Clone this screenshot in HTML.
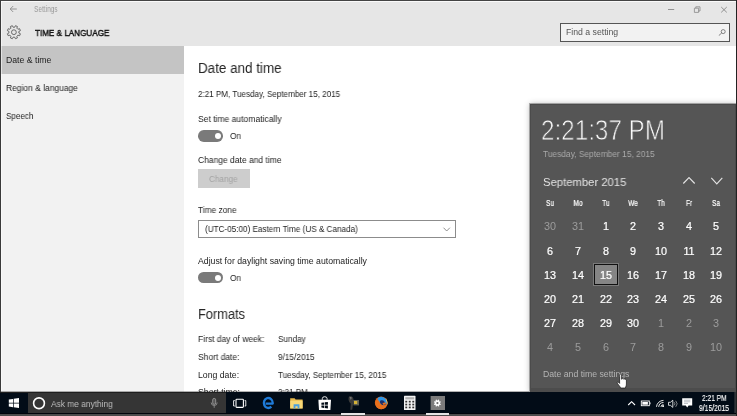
<!DOCTYPE html>
<html><head><meta charset="utf-8">
<style>
*{margin:0;padding:0;box-sizing:border-box}
html,body{width:737px;height:416px;overflow:hidden;background:#fff}
body{font-family:"Liberation Sans",sans-serif;color:#222;position:relative}
.abs{position:absolute}
.t,.c,.dh{will-change:transform}
.t{position:absolute;white-space:nowrap;line-height:1;transform-origin:0 50%}
#hdr{left:0;top:0;width:737px;height:46px;background:#e6e6e6}
#side{left:0;top:46px;width:184px;height:346px;background:#f2f2f2}
#sel{left:0;top:46px;width:184px;height:27.500px;background:#c4c4c4}
#bt{z-index:8;left:0;top:0;width:737px;height:1px;background:#444}
#bl{z-index:8;left:0;top:0;width:1px;height:392px;background:#3a3a3a}
#br{z-index:8;left:736px;top:0;width:1px;height:416px;background:#222}
#search{left:560px;top:22.500px;width:170px;height:19px;border:1px solid #555;background:#f2f2f2}
#cal{left:530px;top:104px;width:206px;height:288px;background:#555;border:1px solid #4b4b4b;border-bottom:0;box-shadow:0 0 0 1px rgba(70,70,70,.4),0 0 6px rgba(0,0,0,.3)}
#calb{left:530px;top:388px;width:206px;height:4px;background:#4c4c4c}
#task{z-index:5;left:0;top:392px;width:737px;height:24px;background:#020c17}
#tsearch{z-index:5;left:27.500px;top:392px;width:198px;height:24px;background:#353535}
#tbot{z-index:7;left:0;top:414px;width:737px;height:2px;background:#4c4c4c}
.ul{position:absolute;z-index:8;top:413px;height:2px;background:#e4e4e4}
#tline{z-index:6;left:0;top:391px;width:529px;height:1px;background:rgba(0,0,0,.3)}
#tline3{z-index:6;left:0;top:413px;width:737px;height:1px;background:#00040b}
#tline2{z-index:6;left:0;top:392px;width:226px;height:1px;background:#1e1e1e}
.tg{position:absolute;width:25.300px;height:11.600px;border-radius:5.800px;background:#7a7a7a}
.tg i{position:absolute;left:16.700px;top:2.800px;width:6px;height:6px;border-radius:50%;background:#fff}
.c{position:absolute;width:28px;text-align:center;font-size:10.800px;color:#fff;line-height:1;white-space:nowrap;-webkit-text-stroke:0.200px #fff}
.d{color:#9c9c9c;-webkit-text-stroke:0}
.dh{transform:scaleX(.79);position:absolute;width:28px;text-align:center;font-size:8.200px;color:#fff;line-height:1;-webkit-text-stroke:0.200px #fff}
</style></head><body>
<div class="abs" id="hdr"></div>
<div class="abs" id="side"></div>
<div class="abs" id="sel"></div>
<div class="abs" id="search"></div>
<div class="abs" style="left:1px;top:1px;width:735px;height:1px;background:rgba(255,255,255,.8)"></div><div class="abs" style="left:1px;top:1px;width:1px;height:390px;background:rgba(255,255,255,.55)"></div>

<!-- title bar icons -->
<svg class="abs" style="left:9px;top:5px" width="10" height="9" viewBox="0 0 10 9"><path d="M4.200 1 L1.200 4 L4.200 7 M1.200 4 H7.800" stroke="#8c8c8c" stroke-width="0.900" fill="none"/></svg>
<svg class="abs" style="left:665px;top:4px" width="70" height="12" viewBox="0 0 70 12">
<path d="M3 5.500 H9.200" stroke="#888" stroke-width="0.900" fill="none"/>
<path d="M29.400 4.200 h4.200 v4.200 h-4.200 z M30.800 4.200 v-1.400 h4.200 v4.200 h-1.400" stroke="#888" stroke-width="0.800" fill="none"/>
<path d="M56.200 3 L61.800 8.400 M61.800 3 L56.200 8.400" stroke="#888" stroke-width="0.900" fill="none"/>
</svg>
<!-- gear -->
<svg class="abs" style="left:0;top:20px" width="30" height="24" viewBox="0 20 30 24"><path d="M18.85 32.94 L20.41 33.76 L19.61 35.70 L17.92 35.17 L16.87 36.22 L17.40 37.91 L15.46 38.71 L14.64 37.15 L13.16 37.15 L12.34 38.71 L10.40 37.91 L10.93 36.22 L9.88 35.17 L8.19 35.70 L7.39 33.76 L8.95 32.94 L8.95 31.46 L7.39 30.64 L8.19 28.70 L9.88 29.23 L10.93 28.18 L10.40 26.49 L12.34 25.69 L13.16 27.25 L14.64 27.25 L15.46 25.69 L17.40 26.49 L16.87 28.18 L17.92 29.23 L19.61 28.70 L20.41 30.64 L18.85 31.46 Z" fill="none" stroke="#5c5c5c" stroke-width="0.9" stroke-linejoin="round"/><circle cx="13.9" cy="32.2" r="2.4" fill="none" stroke="#5c5c5c" stroke-width="0.9"/></svg>
<!-- search icon -->
<svg class="abs" style="left:718px;top:29px" width="8" height="7" viewBox="0 0 8 7"><circle cx="5.200" cy="2.600" r="2" stroke="#666" stroke-width="0.800" fill="none"/><path d="M3.700 4 L0.800 6.600" stroke="#666" stroke-width="0.800" fill="none"/></svg>

<!-- content widgets -->
<div class="tg" style="left:198px;top:130px"><i></i></div>
<div class="abs" style="left:198px;top:169px;width:52px;height:19px;background:#cdcdcd"></div>
<div class="abs" style="left:198px;top:220px;width:258px;height:18px;border:1px solid #8c8c8c;background:#fff"></div>
<svg class="abs" style="left:440px;top:224px" width="14" height="10" viewBox="440 224 14 10"><path d="M443.500 227.700 L446.700 231 L449.900 227.700" stroke="#7c7c7c" stroke-width="0.850" fill="none"/></svg>
<div class="tg" style="left:198px;top:271.800px"><i></i></div>

<!-- calendar panel -->
<div class="abs" id="cal"></div><div class="abs" id="calb"></div>
<svg class="abs" style="left:680px;top:172px" width="50" height="16" viewBox="680 172 50 16"><path d="M683.300 183.500 L689 177.500 L694.700 183.500 M711.300 177.900 L716.800 183.900 L722.300 177.900" stroke="#e2e2e2" stroke-width="1.150" fill="none"/></svg>
<!-- selected day -->
<div class="abs" style="left:593px;top:263px;width:26px;height:23px;background:#858585;border:1px solid #7a7a7a;box-shadow:inset 0 0 0 1px #111"></div>

<div class="t" id="t0" style="left:34.00px;top:6.00px;font-size:8.2px;color:#9a9a9a;transform:scaleX(0.7965);">Settings</div>
<div class="t" id="t1" style="left:35.00px;top:28.00px;font-size:9.8px;color:#111;transform:scaleX(0.8279);-webkit-text-stroke:0.45px #111">TIME &amp; LANGUAGE</div>
<div class="t" id="t2" style="left:566.00px;top:28.00px;font-size:8.7px;color:#555;transform:scaleX(1.0010);">Find a setting</div>
<div class="t" id="t3" style="left:6.00px;top:56.00px;font-size:8.7px;color:#222;transform:scaleX(0.9898);">Date &amp; time</div>
<div class="t" id="t4" style="left:6.00px;top:84.00px;font-size:8.7px;color:#222;transform:scaleX(0.9732);">Region &amp; language</div>
<div class="t" id="t5" style="left:6.00px;top:112.00px;font-size:8.7px;color:#222;transform:scaleX(0.9281);">Speech</div>
<div class="t" id="t6" style="left:198.00px;top:61.00px;font-size:14px;color:#262626;transform:scaleX(0.9595);">Date and time</div>
<div class="t" id="t7" style="left:198.00px;top:90.00px;font-size:8.7px;color:#222;transform:scaleX(0.9296);">2:21 PM, Tuesday, September 15, 2015</div>
<div class="t" id="t8" style="left:198.00px;top:115.00px;font-size:8.7px;color:#222;transform:scaleX(0.9828);">Set time automatically</div>
<div class="t" id="t9" style="left:230.00px;top:132.00px;font-size:8.7px;color:#222;transform:scaleX(0.9571);">On</div>
<div class="t" id="t10" style="left:198.00px;top:156.00px;font-size:8.7px;color:#222;transform:scaleX(0.9770);">Change date and time</div>
<div class="t" id="t11" style="left:209.00px;top:175.00px;font-size:8.7px;color:#a4a4a4;transform:scaleX(0.9424);">Change</div>
<div class="t" id="t12" style="left:198.00px;top:206.00px;font-size:8.7px;color:#222;transform:scaleX(0.9570);">Time zone</div>
<div class="t" id="t13" style="left:205.00px;top:225.00px;font-size:8.7px;color:#222;transform:scaleX(0.9362);">(UTC-05:00) Eastern Time (US &amp; Canada)</div>
<div class="t" id="t14" style="left:198.00px;top:257.00px;font-size:8.7px;color:#222;transform:scaleX(1.0024);">Adjust for daylight saving time automatically</div>
<div class="t" id="t15" style="left:230.00px;top:274.00px;font-size:8.7px;color:#222;transform:scaleX(0.9571);">On</div>
<div class="t" id="t16" style="left:198.00px;top:307.00px;font-size:14px;color:#262626;transform:scaleX(0.9152);">Formats</div>
<div class="t" id="t17" style="left:198.00px;top:335.00px;font-size:8.7px;color:#222;transform:scaleX(0.9744);">First day of week:</div>
<div class="t" id="t18" style="left:278.00px;top:335.00px;font-size:8.7px;color:#222;transform:scaleX(0.9414);">Sunday</div>
<div class="t" id="t19" style="left:198.00px;top:353.00px;font-size:8.7px;color:#222;transform:scaleX(0.9770);">Short date:</div>
<div class="t" id="t20" style="left:278.00px;top:353.00px;font-size:8.7px;color:#222;transform:scaleX(0.9483);">9/15/2015</div>
<div class="t" id="t21" style="left:198.00px;top:371.00px;font-size:8.7px;color:#222;transform:scaleX(0.9886);">Long date:</div>
<div class="t" id="t22" style="left:278.00px;top:371.00px;font-size:8.7px;color:#222;transform:scaleX(0.9354);">Tuesday, September 15, 2015</div>
<div class="t" id="t23" style="left:198.00px;top:388.00px;font-size:8.7px;color:#222;transform:scaleX(0.9890);">Short time:</div>
<div class="t" id="t24" style="left:278.00px;top:388.00px;font-size:8.7px;color:#222;transform:scaleX(0.9216);">2:21 PM</div>
<div class="t" id="t25" style="left:541.00px;top:116.00px;font-size:28.6px;color:#fff;transform:scaleX(0.8475);-webkit-text-stroke:0.8px #555">2:21:37 PM</div>
<div class="t" id="t26" style="left:543.00px;top:150.00px;font-size:8.7px;color:#aaa;transform:scaleX(0.9640);">Tuesday, September 15, 2015</div>
<div class="t" id="t27" style="left:543.00px;top:177.00px;font-size:11.5px;color:#e4e4e4;transform:scaleX(0.9798);">September 2015</div>
<div class="t" id="t28" style="left:543.00px;top:370.00px;font-size:8.7px;color:#b4b4b4;transform:scaleX(0.9947);">Date and time settings</div>
<div class="t" id="t29" style="left:51.00px;top:400.00px;font-size:9px;color:#bebebe;transform:scaleX(0.9288);z-index:6">Ask me anything</div>
<div class="t" id="t30" style="left:702.00px;top:395.00px;font-size:8.2px;color:#fff;transform:scaleX(0.8068);z-index:6;-webkit-text-stroke:0.15px #fff">2:21 PM</div>
<div class="t" id="t31" style="left:699.00px;top:405.00px;font-size:8.2px;color:#fff;transform:scaleX(0.8254);z-index:6;-webkit-text-stroke:0.15px #fff">9/15/2015</div>
<div class="dh" style="left:536.40px;top:200.00px">Su</div>
<div class="dh" style="left:564.00px;top:200.00px">Mo</div>
<div class="dh" style="left:591.70px;top:200.00px">Tu</div>
<div class="dh" style="left:619.20px;top:200.00px">We</div>
<div class="dh" style="left:646.80px;top:200.00px">Th</div>
<div class="dh" style="left:674.50px;top:200.00px">Fr</div>
<div class="dh" style="left:702.30px;top:200.00px">Sa</div>
<div class="c d" style="left:536.40px;top:221.00px">30</div>
<div class="c d" style="left:564.00px;top:221.00px">31</div>
<div class="c" style="left:591.70px;top:221.00px">1</div>
<div class="c" style="left:619.20px;top:221.00px">2</div>
<div class="c" style="left:646.80px;top:221.00px">3</div>
<div class="c" style="left:674.50px;top:221.00px">4</div>
<div class="c" style="left:702.30px;top:221.00px">5</div>
<div class="c" style="left:536.40px;top:246.00px">6</div>
<div class="c" style="left:564.00px;top:246.00px">7</div>
<div class="c" style="left:591.70px;top:246.00px">8</div>
<div class="c" style="left:619.20px;top:246.00px">9</div>
<div class="c" style="left:646.80px;top:246.00px">10</div>
<div class="c" style="left:674.50px;top:246.00px">11</div>
<div class="c" style="left:702.30px;top:246.00px">12</div>
<div class="c" style="left:536.40px;top:270.00px">13</div>
<div class="c" style="left:564.00px;top:270.00px">14</div>
<div class="c" style="left:591.70px;top:270.00px">15</div>
<div class="c" style="left:619.20px;top:270.00px">16</div>
<div class="c" style="left:646.80px;top:270.00px">17</div>
<div class="c" style="left:674.50px;top:270.00px">18</div>
<div class="c" style="left:702.30px;top:270.00px">19</div>
<div class="c" style="left:536.40px;top:294.00px">20</div>
<div class="c" style="left:564.00px;top:294.00px">21</div>
<div class="c" style="left:591.70px;top:294.00px">22</div>
<div class="c" style="left:619.20px;top:294.00px">23</div>
<div class="c" style="left:646.80px;top:294.00px">24</div>
<div class="c" style="left:674.50px;top:294.00px">25</div>
<div class="c" style="left:702.30px;top:294.00px">26</div>
<div class="c" style="left:536.40px;top:318.00px">27</div>
<div class="c" style="left:564.00px;top:318.00px">28</div>
<div class="c" style="left:591.70px;top:318.00px">29</div>
<div class="c" style="left:619.20px;top:318.00px">30</div>
<div class="c d" style="left:646.80px;top:318.00px">1</div>
<div class="c d" style="left:674.50px;top:318.00px">2</div>
<div class="c d" style="left:702.30px;top:318.00px">3</div>
<div class="c d" style="left:536.40px;top:342.00px">4</div>
<div class="c d" style="left:564.00px;top:342.00px">5</div>
<div class="c d" style="left:591.70px;top:342.00px">6</div>
<div class="c d" style="left:619.20px;top:342.00px">7</div>
<div class="c d" style="left:646.80px;top:342.00px">8</div>
<div class="c d" style="left:674.50px;top:342.00px">9</div>
<div class="c d" style="left:702.30px;top:342.00px">10</div>
<!-- taskbar -->
<div class="abs" id="task"></div>
<div class="abs" id="tsearch"></div>
<svg class="abs" style="left:0;top:391px;z-index:6" width="737" height="25" viewBox="0 391 737 25">
<!-- windows logo -->
<path d="M8.800 399.500 L13 398.900 V402.700 H8.800 Z M13.700 398.800 L19 398 V402.700 H13.700 Z M8.800 403.400 H13 V407.200 L8.800 406.600 Z M13.700 403.400 H19 V408.100 L13.700 407.300 Z" fill="#fff"/>
<!-- cortana ring -->
<circle cx="39" cy="403.250" r="5.400" fill="none" stroke="#fff" stroke-width="1.600"/>
<!-- mic -->
<rect x="212.700" y="398.400" width="3" height="6" rx="1.500" fill="#555" stroke="#a0a0a0" stroke-width="0.800"/>
<path d="M211.200 402.500 a3 3 0 0 0 6 0 M214.200 405.500 V407.800" stroke="#9a9a9a" stroke-width="0.800" fill="none"/>
<!-- task view -->
<rect x="236" y="399.200" width="7.400" height="8.200" rx="0.800" fill="none" stroke="#fff" stroke-width="1.100"/>
<path d="M234.800 400.600 H233.600 V406 H234.800 M244.600 400.600 H245.800 V406 H244.600" fill="none" stroke="#fff" stroke-width="0.900"/>
<!-- edge -->
<path d="M265.600 403.600 H272.750 V403 A4.450 5 0 1 0 271.330 406.660" fill="none" stroke="#1f7bd8" stroke-width="2.300" stroke-linejoin="round"/>
<!-- folder -->
<path d="M290.200 398.200 H294.600 L295.600 399.400 H302.600 V408.400 H290.200 Z" fill="#e8b84a"/>
<path d="M290.200 400.600 H302.600 V408.400 H290.200 Z" fill="#f7d877"/>
<path d="M293.600 404.200 H299.400 V408.400 H297.600 V406.200 H295.400 V408.400 H293.600 Z" fill="#4aa0e0"/>
<!-- store -->
<path d="M318.400 399.800 H331 L330.400 409.900 H319 Z" fill="#fff"/>
<path d="M322.300 399.800 V398.600 a2.400 1.900 0 0 1 4.800 0 V399.800" fill="none" stroke="#fff" stroke-width="0.900"/>
<path d="M321.400 402.700 L324 402.400 V404.800 H321.400 Z M324.700 402.300 L327.900 401.900 V404.800 H324.700 Z M321.400 405.500 H324 V407.900 L321.400 407.600 Z M324.700 405.500 H327.900 V408.400 L324.700 408 Z" fill="#020c17"/>
<!-- app -->
<path d="M349 396.600 C350.800 395.900 352.600 396.600 353.200 398 L353.600 400.200 L353.200 403 L352.200 409.800 H350.300 L350.800 403.600 C349 402.400 347.800 399.200 349 396.600 Z" fill="#3a3a3a"/>
<path d="M349.600 397.200 C350.400 396.800 351.400 397 351.800 397.800 L350.800 400 Z" fill="#777"/>
<rect x="353.400" y="400" width="5.600" height="5.400" fill="#5e5e52"/>
<rect x="354" y="401" width="3.200" height="3" fill="#d4b236"/>
<!-- firefox -->
<circle cx="381.200" cy="402.800" r="6.400" fill="#d9621a"/>
<path d="M377.600 398.200 A5.800 5.800 0 0 1 387 402.800 L385.200 406 L380 404.400 L378 401 Z" fill="#2f97e6"/>
<path d="M380.200 400.800 C381.600 400 383.400 400.200 384.400 401.400 L385.800 404.400 C384.600 405.800 382.400 406 381.200 404.800 C380.200 403.800 379.600 402 380.200 400.800 Z" fill="#1d2f6a"/>
<path d="M375.400 400.600 C377 399.400 378.800 400 379.400 401.800 C380.200 404.400 382.600 406 385.400 405 L387.200 403.600 C387.200 407 384.600 409.200 381.200 409.200 C377.400 409.200 374.400 405.600 375.400 400.600 Z" fill="#e8701c"/>
<path d="M385.600 398.600 C387.200 400.200 388 402.600 387.400 405 C386.800 403 386.400 400.800 385.600 398.600 Z" fill="#f7d060"/>
<path d="M382.400 403.200 L385.200 402.200 L386 404 L383.600 405 Z" fill="#e8701c"/>
<!-- calculator -->
<rect x="404" y="395.800" width="11.500" height="14.200" rx="0.600" fill="#f4f4f4"/>
<rect x="405.300" y="397.200" width="8.900" height="2.200" fill="#b0b0b0"/>
<g fill="#333"><rect x="405.300" y="400.800" width="1.900" height="1.700"/><rect x="408.800" y="400.800" width="1.900" height="1.700"/><rect x="412.300" y="400.800" width="1.900" height="1.700"/>
<rect x="405.300" y="403.700" width="1.900" height="1.700"/><rect x="408.800" y="403.700" width="1.900" height="1.700"/><rect x="412.300" y="403.700" width="1.900" height="1.700"/>
<rect x="405.300" y="406.600" width="1.900" height="1.700"/><rect x="408.800" y="406.600" width="1.900" height="1.700"/><rect x="412.300" y="406.600" width="1.900" height="1.700"/></g>
<!-- settings tile -->
<rect x="430.600" y="396" width="14.400" height="14" fill="#7c7c7c"/>
<path d="M439.98 403.39 L440.91 403.88 L440.44 405.03 L439.43 404.72 L439.02 405.13 L439.33 406.14 L438.18 406.61 L437.69 405.68 L437.11 405.68 L436.62 406.61 L435.47 406.14 L435.78 405.13 L435.37 404.72 L434.36 405.03 L433.89 403.88 L434.82 403.39 L434.82 402.81 L433.89 402.32 L434.36 401.17 L435.37 401.48 L435.78 401.07 L435.47 400.06 L436.62 399.59 L437.11 400.52 L437.69 400.52 L438.18 399.59 L439.33 400.06 L439.02 401.07 L439.43 401.48 L440.44 401.17 L440.91 402.32 L439.98 402.81 Z" fill="#fff"/><circle cx="437.400" cy="403.100" r="1.100" fill="#6a6a6a"/>
<!-- running underlines -->

<!-- tray -->
<rect x="734.600" y="392" width="1" height="22" fill="#505050"/>
<path d="M628.200 405 L631.600 401.700 L635 405" fill="none" stroke="#fff" stroke-width="1.100"/>
<rect x="641.300" y="401" width="8" height="4.700" fill="none" stroke="#fff" stroke-width="0.900"/><rect x="642.300" y="402" width="5.600" height="2.700" fill="#fff"/><rect x="649.600" y="402.400" width="0.900" height="1.900" fill="#fff"/>
<g fill="none" stroke="#e8e8e8" stroke-width="1"><path d="M656.500 406.800 a7 7 0 0 1 7 -6.400"/><path d="M658.700 406.900 a4.800 4.800 0 0 1 4.800 -4.400"/><path d="M660.900 407 a2.600 2.600 0 0 1 2.600 -2.400"/></g><rect x="662.200" y="405.200" width="1.800" height="1.800" fill="#e8e8e8"/>
<path d="M668.500 402.300 H670.400 L672.800 400.200 V407.400 L670.400 405.300 H668.500 Z" fill="none" stroke="#fff" stroke-width="0.800"/>
<path d="M674.200 402.200 a2.300 2.300 0 0 1 0 3.200 M675.700 400.800 a4.300 4.300 0 0 1 0 6" fill="none" stroke="#bbb" stroke-width="0.700"/>
<path d="M682.200 398.200 H692.200 V405.400 H688.600 L687.200 407.400 L685.800 405.400 H682.200 Z" fill="#fff"/>
<path d="M684 400.200 H690.400 M684 401.800 H690.400 M684 403.400 H688" stroke="#8a909a" stroke-width="0.600"/>
</svg>
<!-- hand cursor -->
<svg class="abs" style="left:616px;top:374px;z-index:4" width="12" height="15" viewBox="0 0 12 15"><path d="M3.600 1 a0.900 0.900 0 0 1 1.800 0 V5.200 L6 5 a0.800 0.800 0 0 1 1.500 .2 a0.800 0.800 0 0 1 1.500 .3 a0.800 0.800 0 0 1 1.400 .5 V10 C10.400 12 9.600 12.600 9.400 14 H4.600 C4.200 12.600 2.400 10.800 1.400 9.200 C0.800 8.200 1.800 7.600 2.600 8.400 L3.600 9.400 Z" fill="#fff" stroke="#111" stroke-width="0.700"/></svg>
<div class="abs" id="tbot"></div><div class="abs" id="tline"></div><div class="abs" id="tline2"></div><div class="abs" id="tline3"></div>
<div class="ul" style="left:341px;width:24px"></div><div class="ul" style="left:426px;width:23px"></div>
<div class="abs" id="bt"></div><div class="abs" id="bl"></div><div class="abs" id="br"></div>
</body></html>
